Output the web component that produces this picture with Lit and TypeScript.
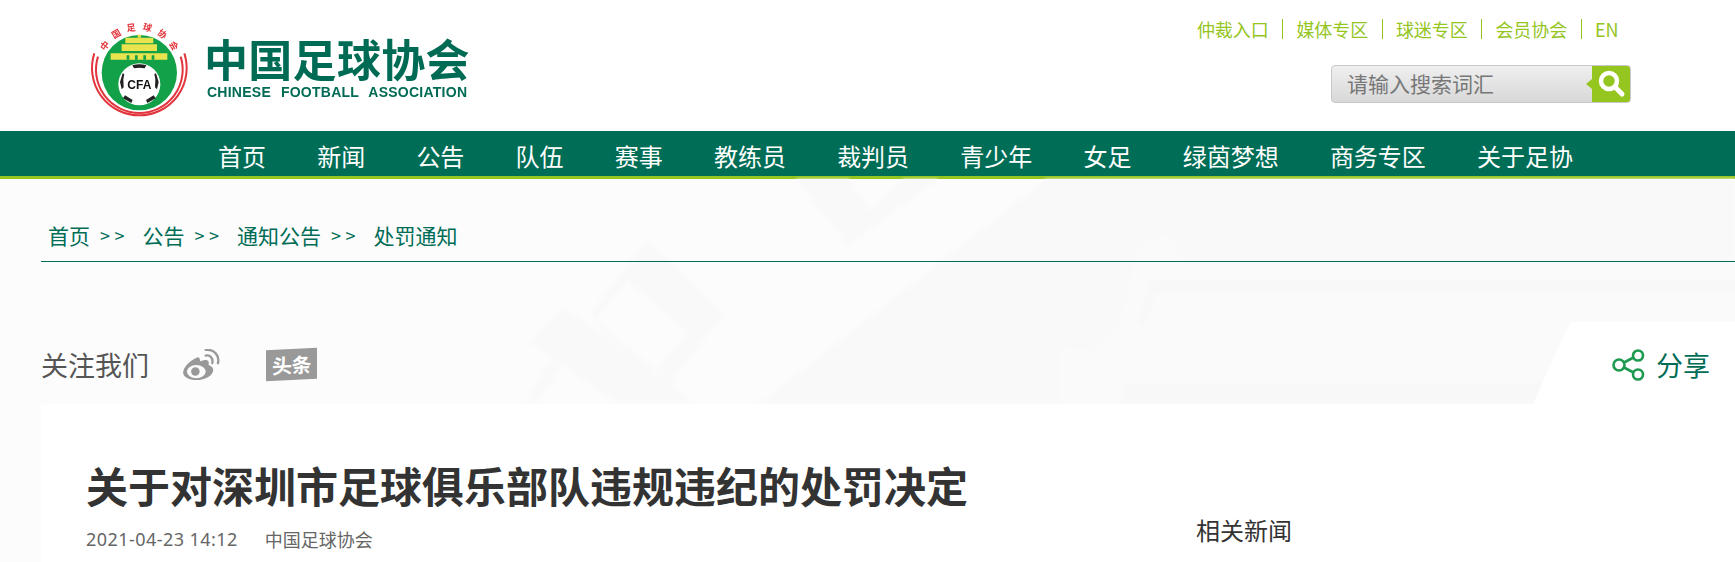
import { LitElement, html, css, svg } from "lit";
import { customElement } from "lit/decorators.js";

const NAV = ["首页","新闻","公告","队伍","赛事","教练员","裁判员","青少年","女足","绿茵梦想","商务专区","关于足协"];
const TOP = ["仲裁入口","媒体专区","球迷专区","会员协会","EN"];
const CRUMB = ["首页","公告","通知公告"];

const logo = svg`<svg class="emblem" viewBox="60 60 300 291" width="100" height="97">
  <path d="M73 160A142 142 0 1 0 343 160" fill="none" stroke="#e2343c" stroke-width="6"/>
  <path d="M84 170A130 130 0 1 0 332 170" fill="none" stroke="#e2343c" stroke-width="6"/>
  <path id="arc" d="M106 155A113 113 0 0 1 310 155" fill="none"/>
  <text font-size="27" font-weight="700" font-family="Noto Sans CJK SC" fill="#e2343c" letter-spacing="18"><textPath href="#arc">中国足球协会</textPath></text>
  <circle cx="208" cy="218" r="113" fill="#12a049"/>
  <path d="M166 113h84v17h-84z M155 133h106v20H155z M122 160h170v19H122z" fill="#e9e34d"/>
  <path d="M203 104h10v9h-10z" fill="#e9e34d"/>
  <path d="M170 166h8v13h-8z M195 166h8v13h-8z M220 166h8v13h-8z M245 166h8v13h-8z" fill="#12a049"/>
  <circle cx="208" cy="253" r="63" fill="#fff"/>
  <path d="M187 196q21-7 42 0l-5 9q-16-4-32 0z M158 220l-8 26 5 22 6-6-1-24 3-16z M258 220l8 26-5 22-6-6 1-24-3-16z M165 286l23 14-4 9-25-14z M251 286l-23 14 4 9 25-14z" fill="#222"/>
  <text x="208" y="266" text-anchor="middle" font-size="36" font-weight="700" font-family="Liberation Sans" fill="#111">CFA</text>
</svg>`;

@customElement("app-root")
export class AppRoot extends LitElement {
  static styles = css`
    :host { display: block; width: 100%; height: 562px; overflow: hidden; font-family: "Noto Sans CJK SC", "Liberation Sans", sans-serif; background: #fff; }
    .top { height: 131px; display: flex; justify-content: space-between; box-sizing: border-box; padding: 20px 104px 0 90px; }
    .brand { display: flex; align-items: flex-start; gap: 17px; }
    .emblem { display: block; filter: blur(0.35px); }
    .brandtext { display: flex; flex-direction: column; padding-top: 13px; color: #006b54; width: 262px; filter: blur(0.3px); }
    .cn { font-size: 44px; line-height: 50px; font-weight: 700; white-space: nowrap; letter-spacing: 0.3px; margin-left: -3px; }
    .en { font: 700 14px/18px "Liberation Sans", sans-serif; letter-spacing: 0.25px; word-spacing: 5.8px; white-space: nowrap; }
    .right { display: flex; flex-direction: column; align-items: flex-end; }
    .toplinks { display: flex; align-items: center; height: 20px; margin: -1px -1px 0 0; color: #95c51f; font-size: 18px; }
    .toplinks span { padding: 0 13.5px 0 13px; border-left: 1px solid #95c51f; line-height: 20px; }
    .toplinks span:first-child { border-left: 0; }
    .search { margin-top: 26px; width: 300px; height: 38px; display: flex; border-radius: 4px; overflow: hidden; background: linear-gradient(#efefef, #d8d8d8); border: 1px solid #c8c8c8; box-sizing: border-box; }
    .ph { flex: 1; color: #777; font-size: 21px; line-height: 35px; padding-left: 15px; }
    .sbtn { width: 38px; background: #95c51f; display: flex; align-items: center; justify-content: center; position: relative; }
    .sbtn::before { content: ""; position: absolute; left: -6px; top: 13px; border: 5px solid transparent; border-left: 0; border-right: 6px solid #95c51f; }
    nav { height: 45px; background: #006d56; border-bottom: 3px solid #95c51f; display: flex; gap: 51.2px; padding-left: 218px; color: #fff; font-size: 24px; line-height: 49px; }
    .body { position: relative; height: 383px; background: #fcfcfc; }
    .deco { position: absolute; left: 0; top: 0; filter: blur(1.5px); }
    .crumb { position: relative; margin-left: 41px; height: 83px; box-sizing: border-box; border-bottom: 1px solid #006d56; padding: 41px 0 0 7px; color: #006d56; font-size: 21px; line-height: 30px; display: flex; white-space: nowrap; }
    .sep { font-size: 18px; letter-spacing: 4.5px; margin: 0 13.5px 0 10px; }
    .follow { position: relative; height: 82px; margin-top: 60px; padding-top: 3px; box-sizing: border-box; display: flex; align-items: center; padding-left: 41px; color: #555; font-size: 27px; }
    .wb { margin-left: 33px; flex: none; }
    .tt { margin-left: 46px; width: 51px; height: 31px; background: #999; color: #fff; font-size: 20px; font-weight: 700; line-height: 31px; text-align: center; transform: skewY(-3deg); letter-spacing: -0.5px; }
    .share { position: absolute; right: 0; top: 0; width: 202px; height: 82px; padding: 3px 0 0 79px; background: #fff; clip-path: polygon(37px 0, 100% 0, 100% 100%, 0 100%); display: flex; align-items: center; gap: 11px; box-sizing: border-box; color: #006d56; font-size: 27px; }
    .panel { position: relative; margin-left: 41px; height: 158px; background: #fff; padding: 0 45px; display: flex; justify-content: space-between; overflow: hidden; }
    h1 { margin: 0; padding-top: 52px; font-size: 42px; line-height: 58px; font-weight: 700; color: #333; white-space: nowrap; }
    .meta { display: flex; gap: 27px; color: #666; font-size: 18px; line-height: 26px; margin-top: 12px; }
    .date { font-family: "Noto Sans", sans-serif; letter-spacing: 0.45px; }
    .rel { color: #333; font-size: 24px; line-height: 34px; padding: 109px 398px 0 0; }
  `;

  render() {
    return html`
      <div class="top">
        <div class="brand">${logo}
          <div class="brandtext"><div class="cn">中国足球协会</div><div class="en">CHINESE FOOTBALL ASSOCIATION</div></div>
        </div>
        <div class="right">
          <div class="toplinks">${TOP.map((t) => html`<span>${t}</span>`)}</div>
          <div class="search"><div class="ph">请输入搜索词汇</div>
            <div class="sbtn"><svg width="30" height="30" viewBox="0 0 30 30"><circle cx="13" cy="12" r="8" fill="none" stroke="#fff" stroke-width="4.5"/><path d="M19 18l7 7" stroke="#fff" stroke-width="5" stroke-linecap="round"/></svg></div>
          </div>
        </div>
      </div>
      <nav>${NAV.map((n) => html`<span>${n}</span>`)}</nav>
      <div class="body">
        <svg class="deco" width="1735" height="383" viewBox="0 0 1735 383">
          <g fill="#f9f9f9">
            <path fill-rule="evenodd" d="M647 61L725 134L670 204L590 135ZM627 102L593 144L653 194L688 153Z"/>
            <polygon points="562,128 530,164 617,224 692,224 670,204 595,150"/>
            <polygon points="525,224 550,182 562,187 537,224"/>
            <polygon points="793,-3 848,66 943,-3 907,-3 870,32 847,-3"/>
            <polygon points="1050,-3 1740,-3 1740,225 759,225"/>
          </g>
          <polygon fill="#fafafa" points="1170,54 1137,68 1120,148 1097,171 1060,168 1060,225 1740,225 1740,83 1180,83"/>
          <g fill="#f8f8f8">
            <polygon points="1150,101 1740,101 1740,114 1156,114 1146,145 1138,145"/>
            <polygon points="1123,204 1740,204 1740,225 1123,225"/>
          </g>
        </svg>
        <div class="crumb">${CRUMB.map((c) => html`<span>${c}</span><span class="sep">&gt;&gt;</span>`)}<span>处罚通知</span></div>
        <div class="follow"><span>关注我们</span>
          <svg class="wb" width="38" height="32" viewBox="0 0 40 34"><path d="M16 9C8 12 1 20 1 25c0 5 7 8 14 8 10 0 18-5 18-11 0-3-3-4-5-5 1-3 0-6-5-5l-4 1c0-3-1-5-3-4z" fill="#999"/><ellipse cx="15" cy="24" rx="10" ry="7" fill="#fcfcfc"/><circle cx="14" cy="24" r="4.5" fill="#999"/><path d="M25 7c5-1 8 3 7 8M25 1c9-1 15 6 13 14" fill="none" stroke="#999" stroke-width="2.5" stroke-linecap="round"/></svg>
          <div class="tt">头条</div>
          <div class="share"><svg width="33" height="32" viewBox="0 0 33 32" fill="none" stroke="#1e9a50" stroke-width="2.6"><circle cx="7" cy="16" r="5.5"/><circle cx="26" cy="6.5" r="5"/><circle cx="26" cy="25.5" r="5"/><path d="M12 13.5l9.5-5M12 18.5l9.5 5"/></svg><span>分享</span></div>
        </div>
        <div class="panel">
          <div><h1>关于对深圳市足球俱乐部队违规违纪的处罚决定</h1>
            <div class="meta"><span class="date">2021-04-23 14:12</span><span>中国足球协会</span></div></div>
          <div class="rel">相关新闻</div>
        </div>
      </div>`;
  }
}
